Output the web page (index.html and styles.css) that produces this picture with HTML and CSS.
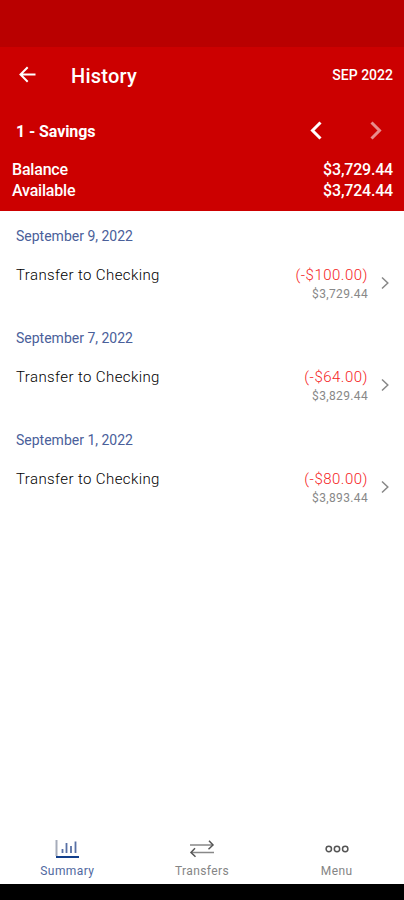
FILE: index.html
```html
<!DOCTYPE html>
<html lang="en">
<head>
    <meta charset="UTF-8">
    <meta name="viewport" content="width=device-width, initial-scale=1.0">
    <title>History</title>
    <link rel="stylesheet" href="styles.css">
</head>
<body>
    <div class="status-bar"></div>

    <header class="header">
        <div class="title-row">
            <svg class="back" width="18" height="18" viewBox="0 0 18 18"><path d="M17.500 8.500H3M9.700 1.300L2.500 8.500l7.200 7.200"/></svg>
            <h1>History</h1>
            <span class="month">SEP 2022</span>
        </div>
        <div class="account-row">
            <span class="account">1 - Savings</span>
            <svg class="prev" width="12" height="20" viewBox="0 0 12 20"><path d="M10.500 1.500L2.500 9.500l8 8"/></svg>
            <svg class="next" width="12" height="20" viewBox="0 0 12 20"><path d="M1.500 1.500L9.500 9.500l-8 8"/></svg>
        </div>
        <div class="balance-row"><span>Balance</span><span>$3,729.44</span></div>
        <div class="balance-row"><span>Available</span><span>$3,724.44</span></div>
    </header>

    <main class="list">
        <section class="entry">
            <h2>September 9, 2022</h2>
            <div class="transaction">
                <span class="name">Transfer to Checking</span>
                <div class="amounts">
                    <span class="amount">(-$100.00)</span>
                    <span class="running">$3,729.44</span>
                </div>
                <svg class="chevron" width="8" height="14" viewBox="0 0 8 14"><path d="M1 1.500L6.800 7 1 12.500"/></svg>
            </div>
        </section>
        <section class="entry">
            <h2>September 7, 2022</h2>
            <div class="transaction">
                <span class="name">Transfer to Checking</span>
                <div class="amounts">
                    <span class="amount">(-$64.00)</span>
                    <span class="running">$3,829.44</span>
                </div>
                <svg class="chevron" width="8" height="14" viewBox="0 0 8 14"><path d="M1 1.500L6.800 7 1 12.500"/></svg>
            </div>
        </section>
        <section class="entry">
            <h2>September 1, 2022</h2>
            <div class="transaction">
                <span class="name">Transfer to Checking</span>
                <div class="amounts">
                    <span class="amount">(-$80.00)</span>
                    <span class="running">$3,893.44</span>
                </div>
                <svg class="chevron" width="8" height="14" viewBox="0 0 8 14"><path d="M1 1.500L6.800 7 1 12.500"/></svg>
            </div>
        </section>
    </main>

    <nav class="tabs">
        <a class="tab active">
            <svg width="26" height="20" viewBox="0 0 26 20">
                <path class="axis" d="M2.500 1v16"/>
                <path class="bars" d="M8.500 10v4M12.500 4v10M17 7v7M21.500 2.500v11.500"/>
                <path class="base" d="M2 18h23"/>
            </svg>
            <span>Summary</span>
        </a>
        <a class="tab">
            <svg width="26" height="20" viewBox="0 0 26 20">
                <path class="line" d="M1 6h22M3 13.500h22"/>
                <path class="head" d="M20 1.800L24 6l-4.500 4.200M6 9.300L2 13.500l4.500 4.200"/>
            </svg>
            <span>Transfers</span>
        </a>
        <a class="tab">
            <svg width="26" height="20" viewBox="0 0 26 20">
                <g class="dots"><circle cx="4.800" cy="10" r="2.700"/><circle cx="13" cy="10" r="2.700"/><circle cx="21.200" cy="10" r="2.700"/></g>
            </svg>
            <span>Menu</span>
        </a>
    </nav>
    <div class="system-bar"></div>
</body>
</html>
```
FILE: styles.css
```css
body {
    margin: 0;
    height: 100vh;
    display: flex;
    flex-direction: column;
    background-color: #fff;
    font-family: Roboto, "Liberation Sans", sans-serif;
    overflow: hidden;
}

svg {
    display: block;
    flex: none;
    fill: none;
}

.status-bar {
    height: 47px;
    background-color: #b90000;
}

/* red account header */
.header {
    height: 164px;
    background-color: #cc0000;
    color: #fff;
}

.title-row {
    display: flex;
    align-items: center;
    height: 56px;
    padding: 0 11px 0 18px;
}

.title-row h1 {
    flex: 1;
    margin: 1px 0 0 35px;
    font-size: 20px;
    font-weight: 500;
    letter-spacing: 0.25px;
}

.back {
    stroke: #fff;
    stroke-width: 2;
}

.month {
    font-size: 14px;
    font-weight: 500;
}

.account-row {
    display: flex;
    align-items: center;
    height: 56px;
    padding: 0 22px 0 16px;
}

.account {
    flex: 1;
    font-size: 16px;
    font-weight: 700;
    letter-spacing: -0.1px;
}

.prev,
.next {
    stroke: #fff;
    stroke-width: 3;
}

.next {
    margin-left: 48px;
    opacity: 0.55;
}

.balance-row {
    display: flex;
    justify-content: space-between;
    padding: 0 11px 0 12px;
    font-size: 16px;
    font-weight: 500;
    line-height: 21px;
    letter-spacing: -0.2px;
}

/* transactions */
.list {
    flex: 1;
}

.entry {
    height: 102px;
}

.entry h2 {
    margin: 0;
    padding: 15px 16px 0;
    color: #4a609a;
    font-size: 14px;
    font-weight: 400;
    line-height: 20px;
}

.transaction {
    display: flex;
    align-items: flex-start;
    padding: 18px 15px 0 16px;
}

.name {
    flex: 1;
    color: #000;
    font-size: 15px;
    font-weight: 300;
    line-height: 22px;
    letter-spacing: 0.4px;
}

.amounts {
    display: flex;
    flex-direction: column;
    align-items: flex-end;
}

.amount {
    color: #f51c1c;
    font-size: 15px;
    font-weight: 300;
    line-height: 22px;
    letter-spacing: 0.5px;
}

.running {
    color: #888;
    font-size: 12px;
    line-height: 16px;
    letter-spacing: 0.35px;
}

.chevron {
    margin: 12px 0 0 13px;
    stroke: #888;
    stroke-width: 1.5;
}

/* bottom navigation */
.tabs {
    display: flex;
    height: 47px;
}

.tab {
    flex: 1;
    display: flex;
    flex-direction: column;
    align-items: center;
    padding-top: 2px;
    color: #858585;
    font-size: 12px;
    line-height: 16px;
    letter-spacing: 0.4px;
}

.tab span {
    margin-top: 4px;
}

.active {
    color: #5068a0;
}

.axis {
    stroke: #a6acba;
    stroke-width: 2;
}

.bars {
    stroke: #5870a5;
    stroke-width: 1.8;
}

.base {
    stroke: #123f8c;
    stroke-width: 2;
}

.line {
    stroke: #888;
    stroke-width: 1.5;
}

.head,
.dots {
    stroke: #555;
    stroke-width: 1.5;
}

.system-bar {
    height: 16px;
    background-color: #000;
}
```
